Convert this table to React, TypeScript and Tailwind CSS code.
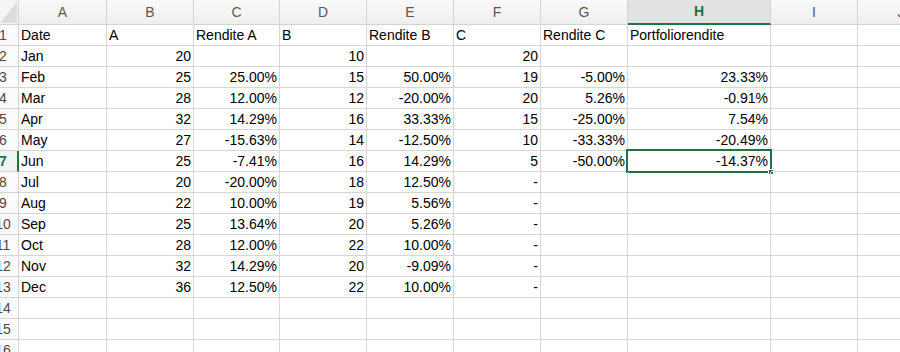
import React from "react";

const GREEN = "#1f7244";

type Cell = { v: string; r?: boolean };

const rows: string[][] = [
  ["Date", "A", "Rendite A", "B", "Rendite B", "C", "Rendite C", "Portfoliorendite", "", ""],
  ["Jan", "20", "", "10", "", "20", "", "", "", ""],
  ["Feb", "25", "25.00%", "15", "50.00%", "19", "-5.00%", "23.33%", "", ""],
  ["Mar", "28", "12.00%", "12", "-20.00%", "20", "5.26%", "-0.91%", "", ""],
  ["Apr", "32", "14.29%", "16", "33.33%", "15", "-25.00%", "7.54%", "", ""],
  ["May", "27", "-15.63%", "14", "-12.50%", "10", "-33.33%", "-20.49%", "", ""],
  ["Jun", "25", "-7.41%", "16", "14.29%", "5", "-50.00%", "-14.37%", "", ""],
  ["Jul", "20", "-20.00%", "18", "12.50%", "-", "", "", "", ""],
  ["Aug", "22", "10.00%", "19", "5.56%", "-", "", "", "", ""],
  ["Sep", "25", "13.64%", "20", "5.26%", "-", "", "", "", ""],
  ["Oct", "28", "12.00%", "22", "10.00%", "-", "", "", "", ""],
  ["Nov", "32", "14.29%", "20", "-9.09%", "-", "", "", "", ""],
  ["Dec", "36", "12.50%", "22", "10.00%", "-", "", "", "", ""],
  ["", "", "", "", "", "", "", "", "", ""],
  ["", "", "", "", "", "", "", "", "", ""],
  ["", "", "", "", "", "", "", "", "", ""],
];

const letters = ["A", "B", "C", "D", "E", "F", "G", "H", "I", "J"];

const gridCols =
  "grid grid-cols-[19px_88px_87px_86px_87px_87px_87px_87px_143px_87px_87px]";

function isNumeric(s: string) {
  return /^-?[\d.]+%?$/.test(s) || s === "-";
}

export default function App() {
  return (
    <div
      className="w-[900px] h-[352px] overflow-hidden bg-white text-black"
      style={{ fontFamily: '"Liberation Sans", Arial, sans-serif' }}
    >
      <div className={`${gridCols} w-[1000px]`}>
        {/* header row */}
        <div className="h-[25px] bg-[#f5f5f5] border-r border-b border-[#d4d4d4] overflow-hidden">
          <svg width="19" height="25" viewBox="0 0 19 25">
            <polygon points="17,2 17,23 0,23" fill="#dcdcdc" />
          </svg>
        </div>
        {letters.map((l) => {
          const sel = l === "H";
          return (
            <div
              key={l}
              className={
                sel
                  ? "h-[25px] flex items-center justify-center bg-[#e2e2e2] border-r border-[#d4d4d4] border-b-2 border-b-[#1f7244] text-[14px] font-bold text-[#1f7244]"
                  : "h-[25px] flex items-center justify-center bg-gradient-to-b from-[#fafafa] to-[#eeeeee] border-r border-b border-[#d4d4d4] text-[14px] text-[#595959]"
              }
            >
              {l}
            </div>
          );
        })}

        {rows.map((row, ri) => {
          const rn = ri + 1;
          const selRow = rn === 7;
          return (
            <React.Fragment key={ri}>
              <div
                className={
                  selRow
                    ? "h-[21px] overflow-hidden border-b border-[#d4d4d4] border-r-2 border-r-[#1f7244] bg-[#f3f3f3] flex items-center"
                    : "h-[21px] overflow-hidden border-b border-r border-[#d4d4d4] bg-[#fbfbfb] flex items-center"
                }
              >
                <div
                  className={
                    selRow
                      ? "ml-[-19px] w-[44px] shrink-0 text-center text-[14px] leading-[20px] font-bold text-[#1f7244]"
                      : "ml-[-19px] w-[44px] shrink-0 text-center text-[14px] leading-[20px] text-[#4a4a4a]"
                  }
                >
                  {rn}
                </div>
              </div>
              {row.map((v, ci) => {
                const right = ri > 0 && isNumeric(v);
                const sel = rn === 7 && ci === 7;
                return (
                  <div
                    key={ci}
                    className={`relative h-[21px] border-r border-b border-[#d6d6d6] text-[14px] leading-[20px] whitespace-nowrap ${
                      right ? "text-right pr-[2px]" : "text-left pl-[2px]"
                    }`}
                  >
                    {v}
                    {sel && (
                      <>
                        <div className="absolute left-[-2px] top-[-2px] right-[-2px] bottom-[-2px] border-2 border-[#1f7244] pointer-events-none" />
                        <div className="absolute right-[-4px] bottom-[-4px] w-[6px] h-[6px] bg-[#1f7244] border border-white" />
                      </>
                    )}
                  </div>
                );
              })}
            </React.Fragment>
          );
        })}
      </div>
    </div>
  );
}
